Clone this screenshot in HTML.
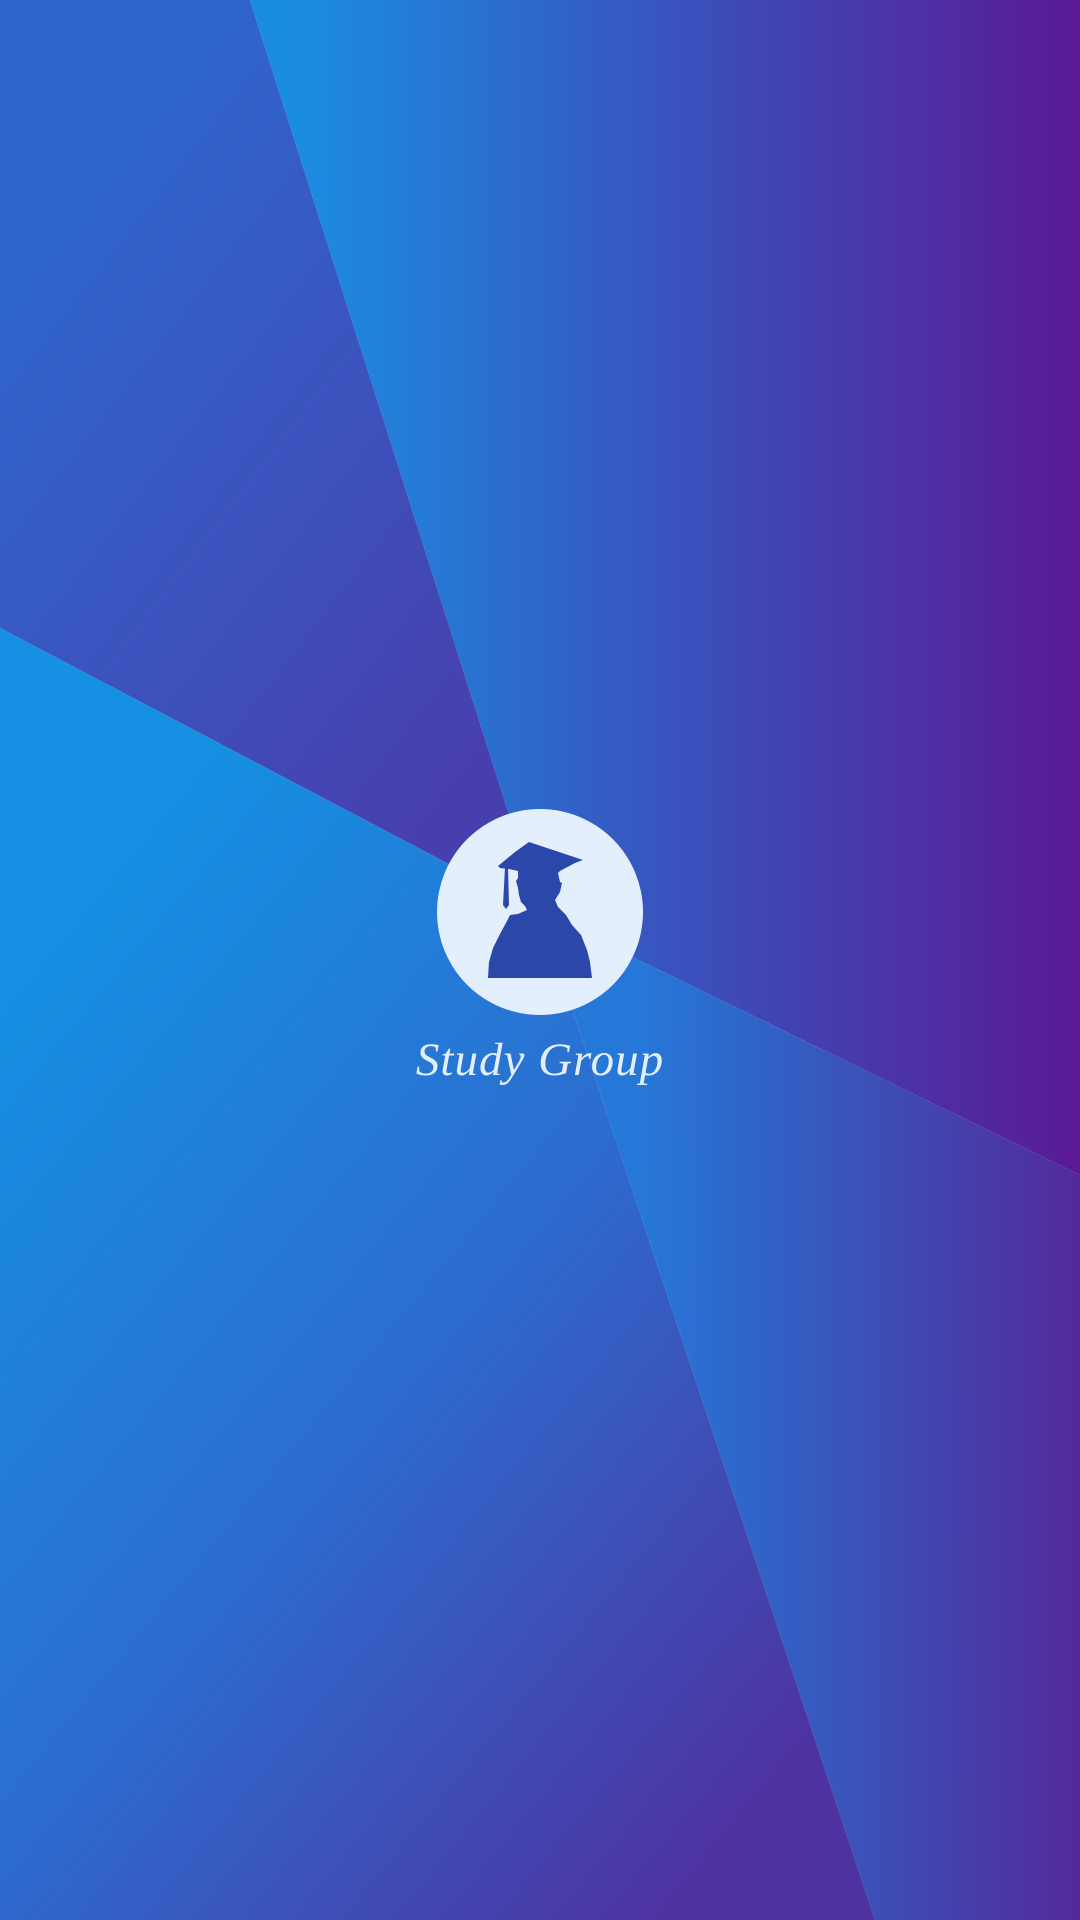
<!DOCTYPE html>
<html><head><meta charset="utf-8"><style>
html,body{margin:0;padding:0;width:1080px;height:1920px;overflow:hidden}
svg{display:block}
</style></head><body>
<svg width="1080" height="1920" viewBox="0 0 1080 1920" xmlns="http://www.w3.org/2000/svg">
<defs>
<linearGradient id="gA" gradientUnits="userSpaceOnUse" x1="0" y1="300" x2="520" y2="700">
<stop offset="0" stop-color="#2f66cc"/><stop offset="1" stop-color="#483fae"/></linearGradient>
<linearGradient id="gB" gradientUnits="userSpaceOnUse" x1="300" y1="0" x2="1080" y2="0">
<stop offset="0" stop-color="#1b8de0"/><stop offset="0.5" stop-color="#3a50bc"/><stop offset="1" stop-color="#5a1a94"/></linearGradient>
<linearGradient id="gC" gradientUnits="userSpaceOnUse" x1="0" y1="1000" x2="850" y2="1700">
<stop offset="0" stop-color="#1590e2"/><stop offset="0.5" stop-color="#2d6ccf"/><stop offset="1" stop-color="#4e32a0"/></linearGradient>
<linearGradient id="gD" gradientUnits="userSpaceOnUse" x1="640" y1="0" x2="1080" y2="0">
<stop offset="0" stop-color="#2578d8"/><stop offset="1" stop-color="#522a9a"/></linearGradient>
</defs>
<polygon points="0,0 250,0 540,912 0,628" fill="url(#gA)"/>
<polygon points="250,0 1080,0 1080,1175 540,912" fill="url(#gB)"/>
<polygon points="0,628 540,912 875,1920 0,1920" fill="url(#gC)"/>
<polygon points="540,912 1080,1175 1080,1920 875,1920" fill="url(#gD)"/>
<circle cx="540" cy="912" r="103" fill="#e3effd"/>
<g fill="#2c47aa">
<path d="M529,842 L583,860 L575,863 L560,871 L558,873 L560,882 L562,883 L560,892 L555,900 L558,907 L566,915 L572,925 L581,935 L587,950 L590,962 L592,978 L488,978 L489,962 L493,948 L500,934 L507,921 L510,915 L518,914 L527,910 L525,906 L521,902 L519,895 L518,888 L516,881 L518,878 L518,871 L509,869 L500,868 L498,866 L515,852 Z"/>
<path d="M505,867 L508,867 L509,905 L506,909 L503,905 Z"/>
</g>
<text x="540" y="1075" text-anchor="middle" font-family="'Liberation Serif',serif" font-style="italic" font-size="47" fill="#e3effd" letter-spacing="1">Study Group</text>
</svg>
</body></html>
